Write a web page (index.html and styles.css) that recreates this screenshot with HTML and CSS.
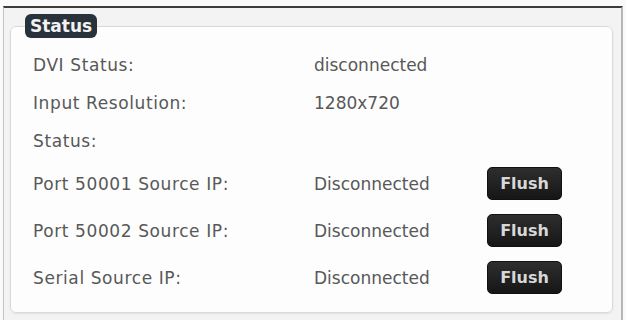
FILE: index.html
```html
<!DOCTYPE html>
<html lang="en">
<head>
  <meta charset="UTF-8">
  <title>Status</title>
  <link rel="stylesheet" href="styles.css">
</head>
<body>
  <div class="panel">
    <fieldset class="status-box">
      <legend>Status</legend>
      <div class="rows">
        <div class="label">DVI Status:</div>
        <div class="value">disconnected</div>
        <div></div>

        <div class="label">Input Resolution:</div>
        <div class="value">1280x720</div>
        <div></div>

        <div class="label">Status:</div>
        <div class="value"></div>
        <div></div>

        <div class="label">Port 50001 Source IP:</div>
        <div class="value">Disconnected</div>
        <div><button class="flush">Flush</button></div>

        <div class="label">Port 50002 Source IP:</div>
        <div class="value">Disconnected</div>
        <div><button class="flush">Flush</button></div>

        <div class="label">Serial Source IP:</div>
        <div class="value">Disconnected</div>
        <div><button class="flush">Flush</button></div>
      </div>
    </fieldset>
  </div>
</body>
</html>
```

FILE: styles.css
```css
html, body {
  overflow: hidden;
}

body {
  margin: 0;
  background: #fafafa;
  font-family: 'DejaVu Sans', sans-serif;
  height: 320px;
}

.panel {
  margin: 6px 3px 0 3px;
  height: 306px;
  border-top: 2px solid #3c3c3c;
  border-left: 1px solid #c4c4c4;
  border-right: 2px solid #b5b5b5;
  background: #f3f3f3;
  padding: 6px 8px 0 6px;
}

.status-box {
  margin: 0;
  height: 299px;
  box-sizing: border-box;
  border: 1px solid #dadada;
  border-radius: 6px;
  background: #fdfdfd;
  padding: 0 14px 0 22px;
  box-shadow: 0 1px 2px rgba(0,0,0,0.08);
}

.status-box legend {
  margin-left: -8px;
  padding: 2px 5px 2px;
  background: #29323a;
  color: #f2f2f2;
  font-weight: bold;
  font-size: 17px;
  line-height: 20px;
  border-radius: 6px;
}

.rows {
  display: grid;
  grid-template-columns: 281px 173px 75px;
  grid-template-rows: 38px 38px 38px 47px 47px 47px;
  padding-top: 8px;
  font-size: 17px;
  color: #585858;
}

.rows > div {
  display: flex;
  align-items: center;
}

.label {
  letter-spacing: 0.6px;
}

.flush {
  width: 75px;
  height: 33px;
  border: 1px solid #111;
  border-radius: 5px;
  background: linear-gradient(to bottom, #2e2e2e, #161616);
  color: #d8d8d8;
  font-family: 'DejaVu Sans', sans-serif;
  font-weight: bold;
  font-size: 16px;
  padding: 0;
}
```
